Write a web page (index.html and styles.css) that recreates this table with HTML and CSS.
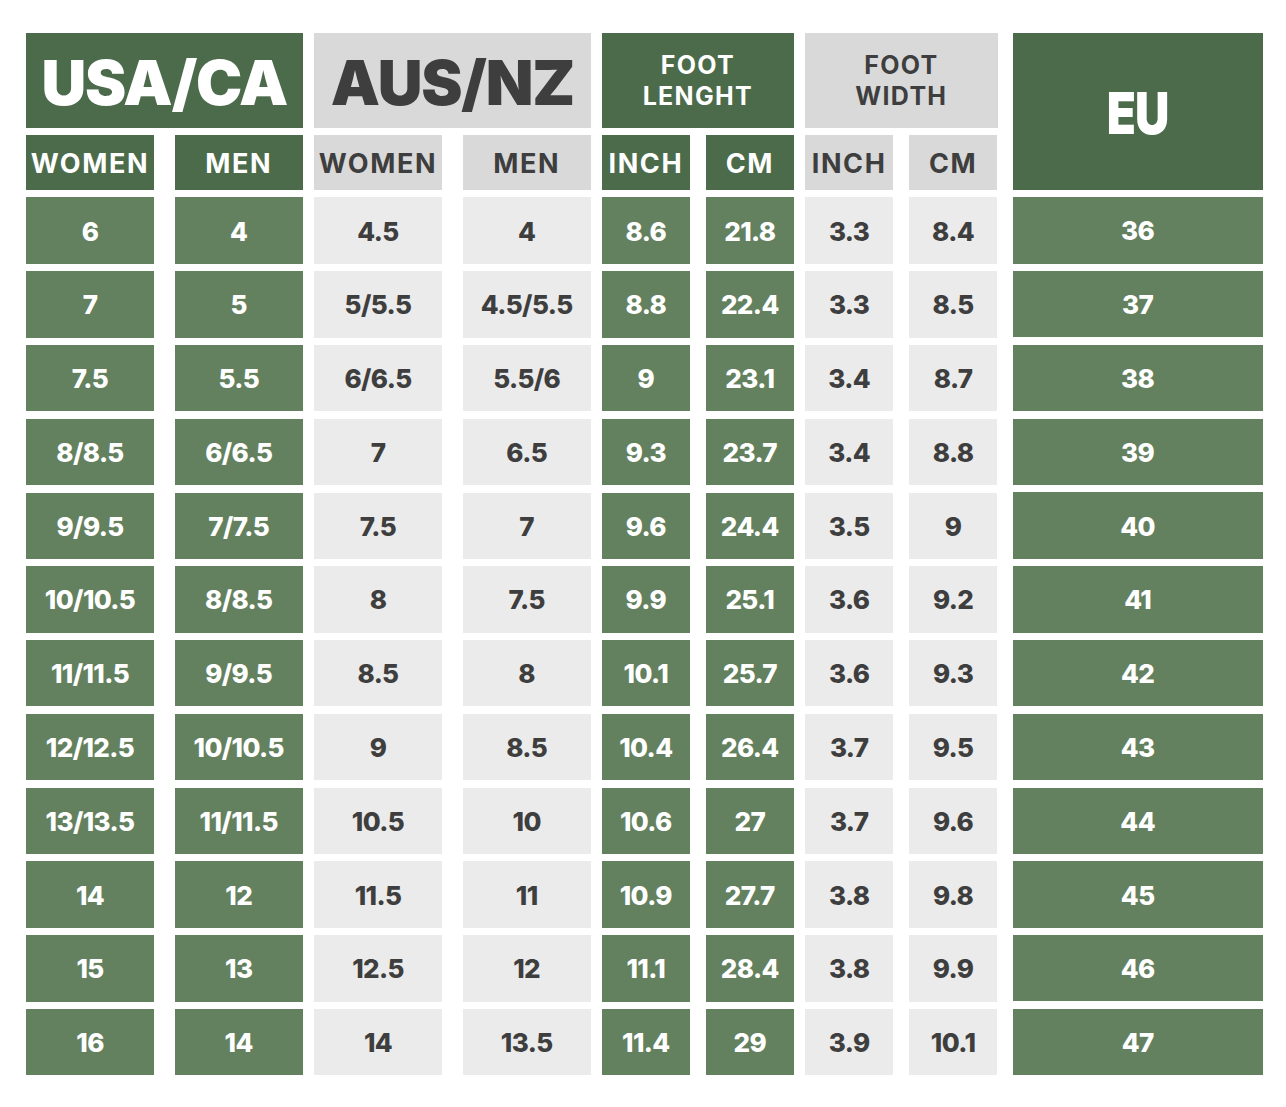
FILE: index.html
```html
<!DOCTYPE html>
<html lang="en">
<head>
<meta charset="utf-8">
<title>Size chart</title>
<link rel="stylesheet" href="styles.css">
</head>
<body>
<div class="chart">
  <div class="group g-usa">
    <div class="head dark big">USA/CA</div>
    <div class="cols wide">
      <div class="sub dark">WOMEN</div><div class="sub dark">MEN</div>
      <div class="cell green">6</div><div class="cell green">4</div>
      <div class="cell green">7</div><div class="cell green">5</div>
      <div class="cell green">7.5</div><div class="cell green">5.5</div>
      <div class="cell green">8/8.5</div><div class="cell green">6/6.5</div>
      <div class="cell green">9/9.5</div><div class="cell green">7/7.5</div>
      <div class="cell green">10/10.5</div><div class="cell green">8/8.5</div>
      <div class="cell green">11/11.5</div><div class="cell green">9/9.5</div>
      <div class="cell green">12/12.5</div><div class="cell green">10/10.5</div>
      <div class="cell green">13/13.5</div><div class="cell green">11/11.5</div>
      <div class="cell green">14</div><div class="cell green">12</div>
      <div class="cell green">15</div><div class="cell green">13</div>
      <div class="cell green">16</div><div class="cell green">14</div>
    </div>
  </div>
  <div class="group g-aus">
    <div class="head grey big">AUS/NZ</div>
    <div class="cols wide">
      <div class="sub grey">WOMEN</div><div class="sub grey">MEN</div>
      <div class="cell light">4.5</div><div class="cell light">4</div>
      <div class="cell light">5/5.5</div><div class="cell light">4.5/5.5</div>
      <div class="cell light">6/6.5</div><div class="cell light">5.5/6</div>
      <div class="cell light">7</div><div class="cell light">6.5</div>
      <div class="cell light">7.5</div><div class="cell light">7</div>
      <div class="cell light">8</div><div class="cell light">7.5</div>
      <div class="cell light">8.5</div><div class="cell light">8</div>
      <div class="cell light">9</div><div class="cell light">8.5</div>
      <div class="cell light">10.5</div><div class="cell light">10</div>
      <div class="cell light">11.5</div><div class="cell light">11</div>
      <div class="cell light">12.5</div><div class="cell light">12</div>
      <div class="cell light">14</div><div class="cell light">13.5</div>
    </div>
  </div>
  <div class="group g-fl">
    <div class="head dark two">FOOT<br>LENGHT</div>
    <div class="cols narrow">
      <div class="sub dark">INCH</div><div class="sub dark">CM</div>
      <div class="cell green">8.6</div><div class="cell green">21.8</div>
      <div class="cell green">8.8</div><div class="cell green">22.4</div>
      <div class="cell green">9</div><div class="cell green">23.1</div>
      <div class="cell green">9.3</div><div class="cell green">23.7</div>
      <div class="cell green">9.6</div><div class="cell green">24.4</div>
      <div class="cell green">9.9</div><div class="cell green">25.1</div>
      <div class="cell green">10.1</div><div class="cell green">25.7</div>
      <div class="cell green">10.4</div><div class="cell green">26.4</div>
      <div class="cell green">10.6</div><div class="cell green">27</div>
      <div class="cell green">10.9</div><div class="cell green">27.7</div>
      <div class="cell green">11.1</div><div class="cell green">28.4</div>
      <div class="cell green">11.4</div><div class="cell green">29</div>
    </div>
  </div>
  <div class="group g-fw">
    <div class="head grey two">FOOT<br>WIDTH</div>
    <div class="cols narrow">
      <div class="sub grey">INCH</div><div class="sub grey">CM</div>
      <div class="cell light">3.3</div><div class="cell light">8.4</div>
      <div class="cell light">3.3</div><div class="cell light">8.5</div>
      <div class="cell light">3.4</div><div class="cell light">8.7</div>
      <div class="cell light">3.4</div><div class="cell light">8.8</div>
      <div class="cell light">3.5</div><div class="cell light">9</div>
      <div class="cell light">3.6</div><div class="cell light">9.2</div>
      <div class="cell light">3.6</div><div class="cell light">9.3</div>
      <div class="cell light">3.7</div><div class="cell light">9.5</div>
      <div class="cell light">3.7</div><div class="cell light">9.6</div>
      <div class="cell light">3.8</div><div class="cell light">9.8</div>
      <div class="cell light">3.8</div><div class="cell light">9.9</div>
      <div class="cell light">3.9</div><div class="cell light">10.1</div>
    </div>
  </div>
  <div class="group g-eu">
    <div class="head dark tall"><span class="eu">EU</span></div>
    <div class="rows">
      <div class="cell green">36</div>
      <div class="cell green">37</div>
      <div class="cell green">38</div>
      <div class="cell green">39</div>
      <div class="cell green">40</div>
      <div class="cell green">41</div>
      <div class="cell green">42</div>
      <div class="cell green">43</div>
      <div class="cell green">44</div>
      <div class="cell green">45</div>
      <div class="cell green">46</div>
      <div class="cell green">47</div>
    </div>
  </div>
</div>
</body>
</html>
```

FILE: styles.css
```css
* { box-sizing: border-box; }

html, body {
  margin: 0;
  padding: 0;
  background: #ffffff;
}

body {
  font-family: Inter, "Noto Sans", "Liberation Sans", sans-serif;
  width: 1286px;
  height: 1107px;
  overflow: hidden;
}

.chart {
  display: flex;
  align-items: flex-start;
  padding: 33.3px 0 0 26px;
}

.group {
  display: flex;
  flex-direction: column;
}

.g-usa { width: 276.7px; }
.g-aus { width: 277px; margin-left: 11.3px; }
.g-fl  { width: 192.3px; margin-left: 10.7px; }
.g-fw  { width: 192.7px; margin-left: 11px; }
.g-eu  { width: 250px; margin-left: 15px; }

.head {
  height: 94.4px;
  margin-bottom: 7.3px;
  display: flex;
  align-items: center;
  justify-content: center;
  text-align: center;
}

.head.tall { height: 156.7px; }

.big {
  font-size: 62px;
  font-weight: 900;
  letter-spacing: -1.2px;
  padding-top: 4px;
}

.two {
  font-size: 25px;
  font-weight: 700;
  line-height: 31px;
  letter-spacing: 1.3px;
  padding-top: 2px;
}

.eu {
  display: inline-block;
  font-size: 58px;
  font-weight: 900;
  letter-spacing: -1px;
  transform: scaleX(0.82);
  padding-top: 2px;
}

.cols {
  display: grid;
  grid-template-rows: 55px repeat(12, 66.4px);
  row-gap: 7.4px;
}

.cols.wide { grid-template-columns: 128px 128px; column-gap: 20.7px; }
.cols.narrow { grid-template-columns: 88.3px 88.3px; column-gap: 15.7px; }

.rows {
  display: grid;
  grid-template-rows: repeat(12, 66.4px);
  row-gap: 7.4px;
}

.sub {
  display: flex;
  align-items: center;
  justify-content: center;
  font-size: 27px;
  font-weight: 700;
  letter-spacing: 1.6px;
  padding-top: 2px;
}

.cell {
  display: flex;
  align-items: center;
  justify-content: center;
  font-size: 26px;
  font-weight: 800;
  letter-spacing: -0.6px;
  padding-top: 1px;
}

.dark  { background: #4c6b4b; color: #ffffff; }
.grey  { background: #d9d9d9; color: #3e3e3e; }
.green { background: #64815f; color: #ffffff; }
.light { background: #ebebeb; color: #3e3e3e; }
```
